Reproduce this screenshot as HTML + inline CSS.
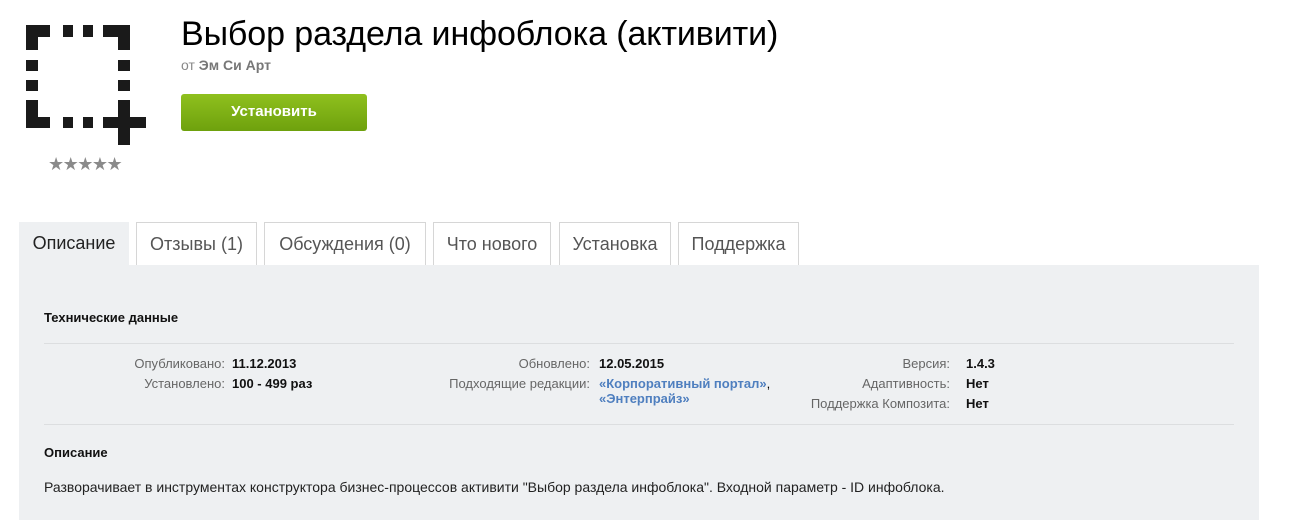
<!DOCTYPE html>
<html><head><meta charset="utf-8"><style>
body{margin:0;background:#fff;font-family:"Liberation Sans",Arial,sans-serif;width:1291px;height:529px;overflow:hidden;position:relative}
.a{position:absolute}
.k{position:absolute;background:#1a1a1a}
h1{position:absolute;left:181px;top:15px;margin:0;font-weight:normal;font-size:34px;color:#000;letter-spacing:-0.1px}
.by{left:181px;top:57px;font-size:14px;color:#888}
.by b{color:#777}
.btn{left:181px;top:94px;width:186px;height:37px;border-radius:3px;background:linear-gradient(#8fc01e,#6ea10d);color:#fff;font-weight:bold;font-size:15px;text-align:center;line-height:36px}
.stars{left:48px;top:154px;color:#8a8a8a;font-size:18px;letter-spacing:-1.5px}
.tab{position:absolute;top:222px;height:43px;border:1px solid #d6d6d6;border-bottom:none;background:#fff;font-size:18px;color:#555;line-height:43px;text-align:center;box-sizing:border-box}
.panel{left:19px;top:265px;width:1240px;height:255px;background:#eef0f2}
.s{font-size:13px}
.l{color:#666;text-align:right}
.v{font-weight:bold;color:#111}
.ln{color:#4f7fbf;font-weight:bold}
.hr{position:absolute;left:44px;width:1190px;height:1px;background:#dcdee0}
</style></head><body>
<div class="k" style="left:26px;top:25px;width:24px;height:12px"></div>
<div class="k" style="left:26px;top:25px;width:12px;height:25px"></div>
<div class="k" style="left:63px;top:25px;width:10px;height:12px"></div>
<div class="k" style="left:83px;top:25px;width:10px;height:12px"></div>
<div class="k" style="left:103px;top:25px;width:27px;height:12px"></div>
<div class="k" style="left:118px;top:25px;width:12px;height:25px"></div>
<div class="k" style="left:26px;top:60px;width:12px;height:11px"></div>
<div class="k" style="left:26px;top:80px;width:12px;height:11px"></div>
<div class="k" style="left:118px;top:60px;width:12px;height:11px"></div>
<div class="k" style="left:118px;top:80px;width:12px;height:11px"></div>
<div class="k" style="left:26px;top:100px;width:12px;height:28px"></div>
<div class="k" style="left:26px;top:117px;width:24px;height:11px"></div>
<div class="k" style="left:63px;top:117px;width:10px;height:11px"></div>
<div class="k" style="left:83px;top:117px;width:10px;height:11px"></div>
<div class="k" style="left:118px;top:100px;width:12px;height:45px"></div>
<div class="k" style="left:103px;top:117px;width:43px;height:11px"></div>
<div class="a stars">★★★★★</div>
<h1>Выбор раздела инфоблока (активити)</h1>
<div class="a by">от <b>Эм Си Арт</b></div>
<div class="a btn">Установить</div>
<div class="a panel"></div>
<div class="tab" style="left:19px;width:110px;background:#eef0f2;border:none;color:#222">Описание</div>
<div class="tab" style="left:136px;width:121px">Отзывы (1)</div>
<div class="tab" style="left:264px;width:162px">Обсуждения (0)</div>
<div class="tab" style="left:433px;width:118px">Что нового</div>
<div class="tab" style="left:559px;width:112px">Установка</div>
<div class="tab" style="left:678px;width:121px">Поддержка</div>
<div class="a s v" style="left:44px;top:310px">Технические данные</div>
<div class="hr" style="top:343px"></div>
<div class="a s l" style="left:60px;width:165px;top:354px;line-height:20px">Опубликовано:<br>Установлено:</div>
<div class="a s v" style="left:232px;top:354px;line-height:20px">11.12.2013<br>100 - 499 раз</div>
<div class="a s l" style="left:400px;width:190px;top:354px;line-height:20px">Обновлено:<br>Подходящие редакции:</div>
<div class="a s" style="left:599px;top:354px;line-height:20px"><span class="v">12.05.2015</span><br><span class="ln">«Корпоративный портал»</span>,<br><span class="ln" style="position:relative;top:-5px">«Энтерпрайз»</span></div>
<div class="a s l" style="left:760px;width:190px;top:354px;line-height:20px">Версия:<br>Адаптивность:<br>Поддержка Композита:</div>
<div class="a s v" style="left:966px;top:354px;line-height:20px">1.4.3<br>Нет<br>Нет</div>
<div class="hr" style="top:424px"></div>
<div class="a s v" style="left:44px;top:445px">Описание</div>
<div class="a" style="left:44px;top:479px;color:#222;font-size:14px">Разворачивает в инструментах конструктора бизнес-процессов активити "Выбор раздела инфоблока". Входной параметр - ID инфоблока.</div>
</body></html>
